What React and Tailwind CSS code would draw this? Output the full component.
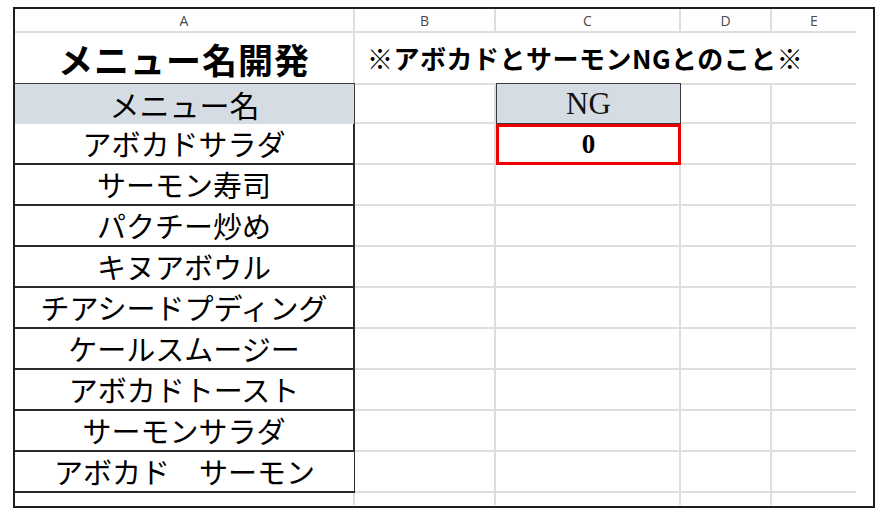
const jp = { fontFamily: '"Noto Sans CJK JP", "Noto Sans", sans-serif' };

const menus = [
  "アボカドサラダ",
  "サーモン寿司",
  "パクチー炒め",
  "キヌアボウル",
  "チアシードプディング",
  "ケールスムージー",
  "アボカドトースト",
  "サーモンサラダ",
  "アボカド　サーモン",
];

const grid = "border-r-2 border-b-2 border-[#dedede]";

const App = () => {
  return (
    <div className="w-[886px] h-[520px] bg-white">
      <div className="ml-[13px] mt-[7px] w-[862px] h-[501px] border-2 border-[#1e1e1e] overflow-hidden">
        {/* 列見出し */}
        <div
          className="flex h-[24px] text-[14px] text-[#4a4a4a]"
          style={{ fontFamily: '"Open Sans", sans-serif' }}
        >
          {[
            ["A", "w-[340px]"],
            ["B", "w-[141px]"],
            ["C", "w-[185px]"],
            ["D", "w-[91px]"],
            ["E", "w-[84px]"],
          ].map(([l, w]) => (
            <div
              key={l}
              className={`${w} flex items-center justify-center border-b-2 border-[#dedede] ${l !== "E" ? "border-r-2" : ""}`}
            >
              {l}
            </div>
          ))}
        </div>

        {/* タイトル行 */}
        <div className="flex h-[50px]" style={jp}>
          <div className="w-[340px] flex items-center justify-center border-r-2 border-[#dedede] text-[35px] font-bold text-black leading-none tracking-[1px]">
            メニュー名開発
          </div>
          <div className="w-[501px] flex items-center pl-[12px] text-[26px] font-bold text-black leading-none whitespace-nowrap tracking-[0.5px]">
            ※アボカドとサーモンNGとのこと※
          </div>
        </div>

        {/* 見出し行 */}
        <div className="flex h-[41px]">
          <div
            className="w-[340px] flex items-center justify-center bg-[#d6dce4] border-t border-r border-[#3a3a3a] text-[30px] text-black leading-none"
            style={jp}
          >
            メニュー名
          </div>
          <div className={`w-[141px] border-t-2 border-t-[#dedede] ${grid}`} />
          <div
            className="w-[185px] flex items-center justify-center bg-[#d6dce4] border border-[#3a3a3a] text-[31px] text-[#111] leading-none"
            style={{ fontFamily: '"Liberation Serif", serif' }}
          >
            NG
          </div>
          <div className={`w-[91px] border-t-2 border-t-[#dedede] ${grid}`} />
          <div className="w-[84px] border-t-2 border-b-2 border-[#dedede]" />
        </div>

        {/* メニュー一覧 */}
        {menus.map((m, i) => (
          <div key={i} className="flex h-[41px]">
            <div
              className={`w-[340px] flex items-center justify-center border-b-2 border-[#2a2a2a] ${i === 8 ? "border-r" : "border-r-2"} text-[29px] text-black leading-none whitespace-nowrap`}
              style={jp}
            >
              {m}
            </div>
            <div className={`w-[141px] ${grid}`} />
            {i === 0 ? (
              <div
                className="w-[185px] flex items-center justify-center border-[3px] border-[#f00000] text-[27px] font-bold text-black leading-none"
                style={{ fontFamily: '"Liberation Serif", serif' }}
              >
                0
              </div>
            ) : (
              <div className={`w-[185px] ${grid}`} />
            )}
            <div className={`w-[91px] ${grid}`} />
            <div className="w-[84px] border-b-2 border-[#dedede]" />
          </div>
        ))}

        {/* 余白行 */}
        <div className="flex h-[12px]">
          <div className="w-[340px] border-r-2 border-[#dedede]" />
          <div className="w-[141px] border-r-2 border-[#dedede]" />
          <div className="w-[185px] border-r-2 border-[#dedede]" />
          <div className="w-[91px] border-r-2 border-[#dedede]" />
        </div>
      </div>
    </div>
  );
};

export default App;
